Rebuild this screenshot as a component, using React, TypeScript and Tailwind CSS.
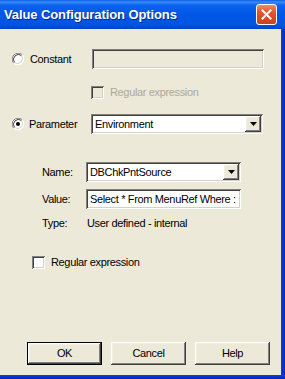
import React from "react";

const sunken =
  "shadow-[inset_1px_1px_0_#808080,inset_-1px_-1px_0_#ffffff,inset_2px_2px_0_#404040,inset_-2px_-2px_0_#d4d0c8]";
const raised =
  "shadow-[inset_-1px_-1px_0_#404040,inset_1px_1px_0_#ffffff,inset_-2px_-2px_0_#808080,inset_2px_2px_0_#f1efe2]";

function Radio({ checked }: { checked?: boolean }) {
  return (
    <svg width="12" height="12" viewBox="0 0 12 12" className="shrink-0">
      <circle cx="6" cy="6" r="6" fill="#ffffff" />
      <path d="M1.76 10.24 A6 6 0 0 1 10.24 1.76" fill="none" stroke="#808080" strokeWidth="1" />
      <path d="M2.5 9.5 A5 5 0 0 1 9.5 2.5" fill="none" stroke="#404040" strokeWidth="1" />
      <path d="M10.24 1.76 A6 6 0 0 1 1.76 10.24" fill="none" stroke="#ffffff" strokeWidth="1" />
      <path d="M9.5 2.5 A5 5 0 0 1 2.5 9.5" fill="none" stroke="#d4d0c8" strokeWidth="1" />
      {checked && <circle cx="6" cy="6" r="2" fill="#000000" />}
    </svg>
  );
}

function Check({ disabled }: { disabled?: boolean }) {
  return (
    <div
      className={`w-[13px] h-[13px] shrink-0 ${sunken} ${disabled ? "bg-[#ece9d8]" : "bg-white"}`}
    />
  );
}

function Combo({ value, width }: { value: string; width: string }) {
  return (
    <div className={`${width} h-[20px] bg-white ${sunken} flex items-center p-[2px]`}>
      <span className="flex-1 pl-[2px] text-black leading-none">{value}</span>
      <div className={`w-[16px] h-full bg-[#ece9d8] ${raised} flex items-center justify-center`}>
        <svg width="7" height="4" viewBox="0 0 7 4">
          <path d="M0 0 H7 L3.5 4 Z" fill="#000000" />
        </svg>
      </div>
    </div>
  );
}

function Btn({ label, def }: { label: string; def?: boolean }) {
  return (
    <div
      className={`w-[75px] h-[23px] flex items-center justify-center bg-[#ece9d8] text-black ${
        def ? "border border-black" : ""
      } ${raised}`}
    >
      {label}
    </div>
  );
}

export default function App() {
  return (
    <div className="w-[285px] h-[379px] flex flex-col overflow-hidden font-['Liberation_Sans',Arial,sans-serif] text-[11px] tracking-[-0.35px]">
      {/* Title bar */}
      <div className="h-[29px] shrink-0 flex items-center justify-between pl-[4px] pr-[8px] bg-[linear-gradient(to_bottom,#0a5ee8_0%,#3b8cf8_7%,#0a62ef_18%,#0057e6_50%,#0054e1_85%,#0042c8_100%)]">
        <span className="text-white font-bold text-[13px] tracking-[-0.1px] [text-shadow:1px_1px_0_#0a2a8a]">
          Value Configuration Options
        </span>
        <div className="w-[21px] h-[21px] rounded-[3px] border border-white bg-[linear-gradient(to_bottom,#ef8a6a_0%,#e2532f_40%,#cc4220_100%)] flex items-center justify-center">
          <svg width="11" height="11" viewBox="0 0 11 11">
            <path d="M1.5 1.5 L9.5 9.5 M9.5 1.5 L1.5 9.5" stroke="#ffffff" strokeWidth="2" strokeLinecap="square" />
          </svg>
        </div>
      </div>

      <div className="flex-1 flex">
        <div className="flex-1 bg-[#ece9d8] flex flex-col text-black">
          {/* Constant */}
          <div className="mt-[20px] h-[20px] flex items-center">
            <div className="w-[92px] flex items-center pl-[12px] gap-[6px]">
              <Radio />
              <span>Constant</span>
            </div>
            <div className={`w-[172px] h-[20px] bg-[#ece9d8] ${sunken}`} />
          </div>

          {/* disabled regular expression */}
          <div className="mt-[17px] h-[12px] flex items-center pl-[91px] gap-[6px]">
            <Check disabled />
            <span className="text-[#aca899]">Regular expression</span>
          </div>

          {/* Parameter */}
          <div className="mt-[16px] h-[20px] flex items-center">
            <div className="w-[91px] flex items-center pl-[12px] gap-[5px]">
              <Radio checked />
              <span>Parameter</span>
            </div>
            <Combo value="Environment" width="w-[172px]" />
          </div>

          {/* Name */}
          <div className="mt-[28px] h-[20px] flex items-center">
            <span className="w-[86px] pl-[42px]">Name:</span>
            <Combo value="DBChkPntSource" width="w-[155px]" />
          </div>

          {/* Value */}
          <div className="mt-[7px] h-[20px] flex items-center">
            <span className="w-[86px] pl-[42px]">Value:</span>
            <div className={`w-[155px] h-[20px] bg-white ${sunken} flex items-center pl-[4px] overflow-hidden whitespace-nowrap`}>
              Select * From MenuRef Where :
            </div>
          </div>

          {/* Type */}
          <div className="mt-[7px] h-[14px] flex items-center">
            <span className="w-[86px] pl-[42px]">Type:</span>
            <span className="pl-[1px]">User defined - internal</span>
          </div>

          {/* Regular expression */}
          <div className="mt-[26px] h-[13px] flex items-center pl-[32px] gap-[6px]">
            <Check />
            <span>Regular expression</span>
          </div>

          {/* Buttons */}
          <div className="mt-auto mb-[10px] flex pl-[27px] gap-[9px]">
            <Btn label="OK" def />
            <Btn label="Cancel" />
            <Btn label="Help" />
          </div>
        </div>
        <div className="w-[4px] bg-[linear-gradient(to_right,#0d3fd0,#0831d9,#0529b8)]" />
      </div>
      <div className="h-[4px] shrink-0 bg-[linear-gradient(to_bottom,#0c45d8,#0831d9,#0426a8)]" />
    </div>
  );
}
